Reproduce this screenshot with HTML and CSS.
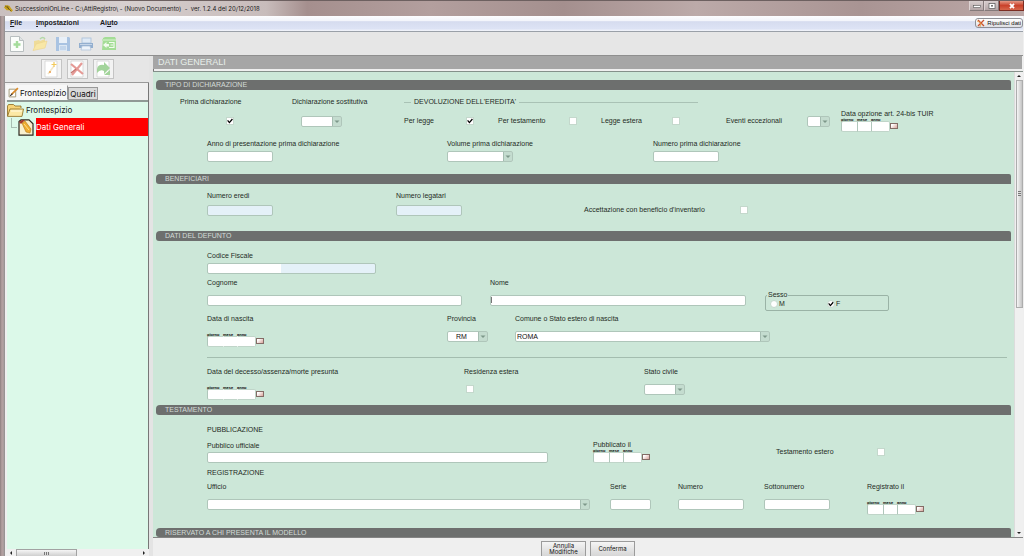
FILE: index.html
```html
<!DOCTYPE html>
<html lang="it">
<head>
<meta charset="utf-8">
<title>SuccessioniOnLine</title>
<link rel="stylesheet" href="styles.css">
</head>
<body>
<div class="window">
  <header class="titlebar">
    <svg class="app-icon" viewBox="0 0 10 10"><path d="M0 4 2 1 6 2 8 5 10 7 8 9 6 7 3 7Z" fill="#c9a21c"/><path d="M1 2 4 4 8 8M4 2 5 6" stroke="#54450c" fill="none" stroke-width=".7"/></svg>
    <h1 class="caption">SuccessioniOnLine - C:\AttiRegistro\ - (Nuovo Documento) &nbsp;- &nbsp;ver. 1.2.4 del 20/12/2018</h1>
    <div class="win-buttons">
      <button class="win-btn" aria-label="Riduci"><svg viewBox="0 0 8 6"><rect x=".5" y="2.5" width="7" height="2" fill="#fff" stroke="#555" stroke-width=".6"/></svg></button>
      <button class="win-btn" aria-label="Ingrandisci"><svg viewBox="0 0 8 6"><rect x="1" y=".5" width="6" height="5" fill="#fff" stroke="#555" stroke-width=".7"/><rect x="3" y="2" width="2" height="1.6" fill="#777"/></svg></button>
      <button class="win-btn win-close" aria-label="Chiudi"><svg viewBox="0 0 8 6"><path d="M2 .8 6 5.2M6 .8 2 5.2" stroke="#fff" stroke-width="1.8"/></svg></button>
    </div>
  </header>

  <nav class="menubar">
    <button class="menu"><u>F</u>ile</button>
    <button class="menu"><u>I</u>mpostazioni</button>
    <button class="menu">Ai<u>u</u>to</button>
    <button class="clean"><svg viewBox="0 0 8 8"><path d="M1 1 7 7M7 1 1 7" stroke="#c9502c" stroke-width="1.3"/><path d="M0 2 4 4 3 8" stroke="#e79a3d" fill="none" stroke-width=".8"/></svg>Ripulisci dati</button>
  </nav>

  <div class="toolbar">
    <button class="tool" aria-label="Nuovo"><svg viewBox="0 0 16 16"><path d="M1.500.5h9l4 4v11h-13z" fill="#fbfdfb" stroke="#b9bfc0"/><path d="M10.500.5v4h4" fill="#dfe3e4" stroke="#b9bfc0"/><path d="M8 5v7M4.500 8.500h7" stroke="#a5dc9c" stroke-width="2.400"/></svg></button>
    <button class="tool" aria-label="Apri"><svg viewBox="0 0 16 16"><path d="M2 14V5l5-1 1 1 5-2v4" fill="#efdc9a"/><path d="M1 14.500 4 8l11-3-2 7z" fill="#f8e7a6" stroke="#ecd48c" stroke-width=".6"/><path d="M8 3q3-3 5 0" stroke="#b5d8a8" fill="none" stroke-width="1.500"/></svg></button>
    <button class="tool" aria-label="Salva"><svg viewBox="0 0 16 16"><path d="M1 1h13l1 1v13H1z" fill="#a9c3e2"/><rect x="4" y="1" width="8" height="6" fill="#e9f0f8"/><rect x="4" y="9" width="8" height="6" fill="#dce7f3"/><path d="M5 11h6M5 13h6" stroke="#a9c3e2"/></svg></button>
    <button class="tool" aria-label="Stampa"><svg viewBox="0 0 16 16"><rect x="4" y="2" width="9" height="5" fill="#dfeaf6" stroke="#a9bfd8" stroke-width=".8"/><path d="M1 7h14v5H1z" fill="#93afcf"/><path d="M2 8.500h12" stroke="#c5d5e8"/><path d="M4 10h8l1 4H3z" fill="#edf3fa" stroke="#a9bfd8" stroke-width=".7"/></svg></button>
    <button class="tool" aria-label="Esci"><svg viewBox="0 0 16 16"><path d="M2 2 4 1h10l1 2v11H1z" fill="#a4dd96"/><path d="M1 3h14v2H1z" fill="#bfe8b4"/><path d="M2 9 5.500 6v2H8v2.500H5.500V12z" fill="#f2fbef"/><path d="M8 6.500h5v5H8M9.500 9H12" fill="none" stroke="#f2fbef" stroke-width="1.200"/></svg></button>
  </div>

  <div class="workspace">
    <aside class="sidebar">
      <div class="doc-tools">
        <button class="doc-tool" aria-label="Aggiungi"><svg viewBox="0 0 18 18"><path d="M3 1h12v16H3z" fill="#fff" stroke="#d2d2d2" stroke-width=".8"/><path d="m6 14 6-8" stroke="#f2e6c8" stroke-width="1.600"/><path d="M12 2v5M9.500 4.500h5" stroke="#f2c95a" stroke-width="1.200"/><circle cx="8" cy="12" r="1" fill="#eb9c4b"/></svg></button>
        <button class="doc-tool" aria-label="Elimina"><svg viewBox="0 0 18 18"><path d="M3 1h12v16H3z" fill="#fff" stroke="#d2d2d2" stroke-width=".8"/><path d="m3 4 12 10M14 3 4 15" stroke="#e59a96" stroke-width="2.200"/><path d="m3 13 5-4" stroke="#c5736e" stroke-width="1.500"/></svg></button>
        <button class="doc-tool" aria-label="Esporta"><svg viewBox="0 0 18 18"><path d="M3 1h12v16H3z" fill="#fff" stroke="#d2d2d2" stroke-width=".8"/><path d="M3 9q1-5 7-4V2l6 6-6 6v-3Q6 9 3 13z" fill="#a3d49b"/><path d="M10 15h6v-5z" fill="#a3d49b"/></svg></button>
      </div>
      <div class="tabs">
        <button class="tab tab-on"><svg viewBox="0 0 10 10"><path d="M1 2h6v7H1z" fill="#fff" stroke="#9a8f6c" stroke-width=".8"/><path d="M3 7 9 1" stroke="#d88a2a" stroke-width="1.600"/><path d="M2 8l2-2" stroke="#333"/></svg>Frontespizio</button>
        <button class="tab">Quadri</button>
      </div>
      <div class="tree">
        <div class="node">
          <svg viewBox="0 0 17 13"><path d="M.5 12V2l1-1.500h5L8 2h6v2" fill="#f6d477" stroke="#8a6a20" stroke-width=".8"/><path d="M.5 12.400 3 5h13.500L15 12.400z" fill="#fce9a5" stroke="#8a6a20" stroke-width=".8"/><path d="M4 7h11" stroke="#fffbe4"/></svg>
          <a href="#frontespizio">Frontespizio</a>
        </div>
        <div class="node child">
          <span class="branch"></span>
          <svg viewBox="0 0 16 17"><path d="M1 2.500 3 .8h8l4 4v11.400H1z" fill="#f9f0cf" stroke="#2d2a22" stroke-width="1.200"/><path d="m4 4 3-2 6 8-1 4-4-1z" fill="#efac31" stroke="#b07818" stroke-width=".6"/><path d="m1 3 3-2h3L3 5z" fill="#a5382b"/><path d="m6 5 5 6" stroke="#ffe08b"/></svg>
          <a class="selected" href="#dati-generali">Dati Generali</a>
        </div>
      </div>
      <div class="hscroll"><i class="arrow left"></i><i class="hthumb"></i><i class="arrow right"></i></div>
    </aside>

    <main class="content">
      <h2 class="page-title">DATI GENERALI</h2>
      <div class="scroll-area">
        <form class="form" id="dati">
          <section>
            <h3>TIPO DI DICHIARAZIONE</h3>
            <div class="body body-type">
              <div class="row r-type-heads">
                <label for="prima">Prima dichiarazione</label>
                <label for="sost">Dichiarazione sostitutiva</label>
                <div class="group-head">DEVOLUZIONE DELL'EREDITA'</div>
              </div>
              <div class="row r-type">
                <input type="checkbox" id="prima" checked>
                <select id="sost" class="w-sm"><option></option></select>
                <label for="legge">Per legge</label>
                <input type="checkbox" id="legge" checked>
                <label for="test">Per testamento</label>
                <input type="checkbox" id="test">
                <label for="estera">Legge estera</label>
                <input type="checkbox" id="estera">
                <label for="eventi">Eventi eccezionali</label>
                <select id="eventi" class="w-xs"><option></option></select>
                <div class="field">
                  <span class="lbl">Data opzione art. 24-bis TUIR</span>
                  <div class="date">
                    <label>giorno<input type="text"></label><label>mese<input type="text"></label><label class="year">anno<input type="text"></label><button type="button" class="cal" aria-label="Calendario"></button>
                  </div>
                </div>
              </div>
              <div class="row r-first">
                <div class="field tight"><label for="anno">Anno di presentazione prima dichiarazione</label><input id="anno" type="text" class="w-md"></div>
                <div class="field tight"><label for="volume">Volume prima dichiarazione</label><select id="volume" class="w-md"><option></option></select></div>
                <div class="field tight"><label for="numprima">Numero prima dichiarazione</label><input id="numprima" type="text" class="w-md"></div>
              </div>
            </div>
          </section>

          <section>
            <h3>BENEFICIARI</h3>
            <div class="body body-benef">
              <div class="row r-benef">
                <div class="field mid"><label for="eredi">Numero eredi</label><input id="eredi" type="text" class="w-md readonly" readonly></div>
                <div class="field mid"><label for="legatari">Numero legatari</label><input id="legatari" type="text" class="w-md readonly" readonly></div>
                <label for="inventario" class="on-control">Accettazione con beneficio d'inventario</label>
                <input type="checkbox" id="inventario" class="on-control">
              </div>
            </div>
          </section>

          <section>
            <h3>DATI DEL DEFUNTO</h3>
            <div class="body body-deceased">
              <div class="row r-code">
                <div class="field tight"><label for="cf">Codice Fiscale</label><input id="cf" type="text" class="code"></div>
              </div>
              <div class="row r-name">
                <div class="field wide"><label for="cognome">Cognome</label><input id="cognome" type="text"></div>
                <div class="field wide"><label for="nome">Nome</label><input id="nome" type="text" class="caret"></div>
                <fieldset class="sex">
                  <legend>Sesso</legend>
                  <label><input type="radio" name="sesso">M</label>
                  <label><input type="radio" name="sesso" checked>F</label>
                </fieldset>
              </div>
              <div class="row r-birth">
                <div class="field wide"><span class="lbl">Data di nascita</span>
                  <div class="date plain"><label>giorno<input type="text"></label><label>mese<input type="text"></label><label class="year">anno<input type="text"></label><button type="button" class="cal" aria-label="Calendario"></button></div>
                </div>
                <div class="field wide"><label for="prov">Provincia</label><select id="prov" class="w-sm prov"><option>RM</option></select></div>
                <div class="field wide"><label for="comune">Comune o Stato estero di nascita</label><select id="comune"><option>ROMA</option></select></div>
              </div>
              <hr>
              <div class="row r-death">
                <div class="field wide"><span class="lbl">Data del decesso/assenza/morte presunta</span>
                  <div class="date plain"><label>giorno<input type="text"></label><label>mese<input type="text"></label><label class="year">anno<input type="text"></label><button type="button" class="cal" aria-label="Calendario"></button></div>
                </div>
                <div class="field wide"><label for="resest">Residenza estera</label><input type="checkbox" id="resest" class="inset"></div>
                <div class="field wide"><label for="civile">Stato civile</label><select id="civile" class="w-sm"><option></option></select></div>
              </div>
            </div>
          </section>

          <section>
            <h3>TESTAMENTO</h3>
            <div class="body body-will">
              <h4>PUBBLICAZIONE</h4>
              <div class="row r-pub">
                <div class="field near"><label for="puff">Pubblico ufficiale</label><input id="puff" type="text"></div>
                <div class="field"><span class="lbl">Pubblicato il</span>
                  <div class="date"><label>giorno<input type="text"></label><label>mese<input type="text"></label><label class="year">anno<input type="text"></label><button type="button" class="cal" aria-label="Calendario"></button></div>
                </div>
                <label for="testest">Testamento estero</label>
                <input type="checkbox" id="testest">
              </div>
              <h4>REGISTRAZIONE</h4>
              <div class="row r-reg">
                <div class="field wide"><label for="ufficio">Ufficio</label><select id="ufficio"><option></option></select></div>
                <div class="field wide"><label for="serie">Serie</label><input id="serie" type="text" class="w-sm"></div>
                <div class="field wide"><label for="numero">Numero</label><input id="numero" type="text" class="w-md"></div>
                <div class="field wide"><label for="sotto">Sottonumero</label><input id="sotto" type="text" class="w-md"></div>
                <div class="field wide"><span class="lbl">Registrato il</span>
                  <div class="date"><label>giorno<input type="text"></label><label>mese<input type="text"></label><label class="year">anno<input type="text"></label><button type="button" class="cal" aria-label="Calendario"></button></div>
                </div>
              </div>
            </div>
          </section>

          <section>
            <h3 class="last">RISERVATO A CHI PRESENTA IL MODELLO</h3>
          </section>
        </form>
        <div class="vscroll"><i class="arrow up"></i><i class="vthumb"></i><i class="vtrack"></i><i class="arrow down"></i></div>
      </div>
      <footer class="actions">
        <button type="reset" form="dati">Annulla Modifiche</button>
        <button type="submit" form="dati">Conferma</button>
      </footer>
    </main>
  </div>
</div>
</body>
</html>
```
FILE: styles.css
```css
* { box-sizing: border-box; }

body {
  margin: 0;
  background: #efefef;
  color: #1f2b25;
  font: 7px/8px "Liberation Sans", Arial, sans-serif;
}
button, input, select { font: inherit; color: inherit; margin: 0; padding: 0; border-radius: 0; }
button { border: 0; background: none; white-space: nowrap; }
h1, h2, h3, h4 { margin: 0; font-size: 7px; font-weight: normal; }
svg { display: block; flex: none; }

.window {
  display: flex;
  flex-direction: column;
  min-height: 100vh;
  padding-right: 1px;
  padding-left: 5px;
  background: linear-gradient(90deg, #8d7f80 0, #b5a1a1 2px, #a79c9d 4px, #8a8a8a 5px, #efefef 5px);
}

/* Title bar */
.titlebar {
  display: flex;
  align-items: center;
  gap: 2px;
  height: 16px;
  margin-right: -1px;
  margin-left: -5px;
  padding-left: 4px;
  border-top: 1px solid #6d6060;
  background: linear-gradient(90deg, #c9bfbf 0, #d6cfcf 12%, #c8bcbb 26%, #a58f8e 30%, #b39f9e 42%, #a48f8e 55%, #bcaaa9 68%, #a99493 84%, #bda9a8 100%);
}
.app-icon { width: 9px; height: 9px; }
.caption { font: 6px/8px Inter, "Noto Sans", sans-serif; color: #201a1a; white-space: nowrap; }
.win-buttons { display: flex; align-self: flex-start; margin-left: auto; }
.win-btn {
  display: flex;
  align-items: center;
  justify-content: center;
  width: 15px;
  height: 10px;
  border: 1px solid #84797a;
  border-top: 0;
  border-left-color: #ddd2d2;
  background: linear-gradient(#d9cfcf, #b4a6a7);
}
.win-btn svg { width: 8px; height: 6px; }
.win-close { width: 25px; border-color: #7c2c22; background: linear-gradient(#e59a86, #c9422b 50%, #d7664a); }

/* Menu bar */
.menubar {
  display: flex;
  align-items: center;
  height: 16px;
  padding-bottom: 1px;
  padding-left: 5px;
  gap: 14px;
  border-bottom: 1px solid #9aa0a8;
  background: linear-gradient(#fdfdff 0, #f3f5fb 30%, #d6dcef 38%, #dde3f5 85%, #f4f6fb 100%);
}
.menu { font: bold 7px/8px "Liberation Sans", Arial, sans-serif; color: #1c1c24; }
.menu + .menu + .menu { margin-left: 7px; }
.clean {
  display: flex;
  align-items: center;
  gap: 2px;
  height: 10px;
  margin-left: auto;
  padding: 0 1px;
  border: 1px solid #8d8f96;
  border-radius: 3px;
  background: linear-gradient(#fff, #dedee2);
  font-size: 6px;
  color: #111;
}
.clean svg { width: 8px; height: 8px; }

/* Main toolbar */
.toolbar {
  display: flex;
  align-items: center;
  gap: 7px;
  height: 24px;
  padding-left: 4px;
  border-bottom: 1px solid #8f8f8f;
  background: #e6e6e6;
}
.tool svg { width: 16px; height: 16px; }

.workspace { display: flex; flex: 1; }

/* Sidebar */
.sidebar {
  display: flex;
  flex-direction: column;
  flex: none;
  width: 148px;
  border-right: 4px solid #e4e4e4;
  background: #efefef;
  box-shadow: inset -1px 0 #777, 1px 0 #777;
}
.doc-tools {
  display: flex;
  justify-content: center;
  gap: 5px;
  padding: 3px 0;
  border-bottom: 1px solid #999;
  background: #e6e6e6;
}
.doc-tool {
  display: flex;
  align-items: center;
  justify-content: center;
  width: 21px;
  height: 20px;
  border: 1px solid #c4c4c4;
  background: #f3f3f3;
}
.doc-tool svg { width: 18px; height: 18px; }
.tabs { display: flex; align-items: flex-end; height: 17px; padding-left: 1px; }
.tab {
  display: flex;
  align-items: center;
  gap: 1px;
  height: 13px;
  padding: 0 1px;
  border: 1px solid #999;
  background: #dadada;
  font: 8px/10px Inter, "Liberation Sans", sans-serif;
  color: #111;
}
.tab svg { width: 11px; height: 11px; }
.tab-on { height: 15px; border-color: transparent #999 transparent transparent; background: #f7f7f7; }
.tree {
  flex: 1;
  margin: 0 1px 0 2px;
  border-top: 2px solid #8f9a95;
  background: #dcf9e9;
}
.node {
  display: flex;
  align-items: center;
  gap: 2px;
  height: 16px;
  font: 8px/10px Inter, "Liberation Sans", sans-serif;
}
.node a { color: #1a1a1a; text-decoration: none; }
.node svg { width: 17px; height: 13px; }
.node.child { height: 18px; padding-left: 4px; gap: 1px; }
.node.child svg { width: 16px; height: 17px; }
.branch { width: 6px; height: 10px; margin-bottom: 8px; border: 1px solid #a9bfb3; border-width: 0 0 1px 1px; }
.node a.selected { flex: 1; margin-left: 1px; padding: 4px 0; background: #f00; color: #fff; }

.arrow { flex: none; width: 0; height: 0; border: 2px solid transparent; }
.arrow.left { border-right-color: #222; border-left: 0; }
.arrow.right { border-left-color: #222; border-right: 0; margin-left: auto; }
.arrow.up { border-bottom-color: #222; border-top: 0; }
.arrow.down { border-top-color: #222; border-bottom: 0; }
.hscroll { display: flex; align-items: center; height: 7px; padding: 0 4px 0 5px; gap: 4px; background: #f0f0f0; }
.hthumb {
  width: 61px;
  height: 7px;
  border: 1px solid #a2a2a2;
  border-bottom: 0;
  background: repeating-linear-gradient(90deg, #777 0 1px, #ddd 1px 2px) center / 5px 3px no-repeat, linear-gradient(#f6f6f6, #cfcfcf);
}

/* Content */
.content { display: flex; flex: 1; flex-direction: column; min-width: 0; }
.page-title {
  margin-right: 1px;
  padding: 0 5px;
  background: #a6a6a6;
  font-size: 9px;
  line-height: 13px;
  color: #e6efea;
}
.scroll-area {
  display: flex;
  flex: 1;
  margin-top: 2px;
  border-top: 1px solid #84908a;
  border-bottom: 1px solid #848484;
}
.form { flex: 1; min-width: 0; padding: 8px 3px 0; background: #cce7d8; }
.vscroll {
  display: flex;
  flex-direction: column;
  align-items: center;
  width: 9px;
  padding: 3px 0;
  gap: 3px;
  border-left: 1px solid #dcdcdc;
  background: #f0f0f0;
}
.vthumb {
  flex: 228;
  width: 7px;
  border: 1px solid #adadad;
  background: repeating-linear-gradient(#777 0 1px, #ddd 1px 2px) center / 3px 5px no-repeat, linear-gradient(90deg, #f6f6f6, #c4c4c4);
}
.vtrack { flex: 220; }

section h3 {
  height: 10px;
  padding-left: 9px;
  border-radius: 4px 2px 0 3px;
  background: #6d6f6e;
  line-height: 10px;
  color: #d3dbd7;
}
section h3.last { height: 9px; }
.body-type { padding: 8px 0 12px; }
.body-benef { padding: 8px 0 15px; }
.body-deceased { padding: 11px 0 5px; }
.body-will { padding: 10px 0 13px; }

/* Rows divide the section width into proportional columns */
.row { display: grid; }
.row > * { min-width: 0; white-space: nowrap; }
.r-type-heads { grid-template-columns: 24fr 112fr 112fr 294fr 313fr; }
.r-type {
  grid-template-columns: 70fr 75fr 103fr 62fr 32fr 71fr 32fr 71fr 54fr 81fr 34fr 170fr;
  align-items: center;
  padding-top: 4px;
}
.row > :first-child { grid-column: 2; }
.r-first { grid-template-columns: 51fr 240fr 206fr 358fr; padding-top: 8px; }
.r-benef { grid-template-columns: 51fr 189fr 188fr 156fr 271fr; }
.r-code { grid-template-columns: 51fr 169fr 635fr; }
.r-name { grid-template-columns: 51fr 283fr 275fr 124fr 122fr; padding-top: 5px; }
.r-name > .field > input { width: 90%; }
.r-name > .field + .field > input { width: 93%; }
.r-birth { grid-template-columns: 51fr 240fr 68fr 255fr 241fr; padding-top: 9px; }
.r-death { grid-template-columns: 51fr 257fr 180fr 367fr; padding-top: 10px; }
.r-pub { grid-template-columns: 51fr 341fr 45fr 183fr 101fr 134fr; align-items: center; padding-top: 7px; }
.r-pub > :nth-child(2) { grid-column: 4; }
.r-reg { grid-template-columns: 51fr 383fr 20fr 68fr 86fr 103fr 144fr; padding-top: 6px; }
.r-reg > :nth-child(2) { grid-column: 4; }

.field { display: flex; flex-direction: column; align-items: flex-start; }
.field.near { gap: 2px; }
.field.tight { gap: 3px; }
.field.mid { gap: 5px; }
.field.wide { gap: 8px; }
.on-control { align-self: end; margin-bottom: 2px; }

.group-head { display: flex; align-items: center; gap: 3px; }
.group-head::before, .group-head::after { content: ""; width: 7px; border-top: 1px solid #a9c2b5; }
.group-head::after { flex: 1; }

h4 { padding-left: 51px; line-height: 9px; }
.r-pub + h4 { padding-top: 5px; }
hr { height: 1px; margin: 10px 4px 0 51px; border: 0; background: #a3bdaf; }

/* Controls */
input[type="text"], select {
  width: 100%;
  height: 11px;
  border: 1px solid #afc6ba;
  border-radius: 2px;
  background: #fff;
}
input.w-md, select.w-md { width: 66px; }
input.w-sm, select.w-sm { width: 41px; }
select.w-xs { width: 23px; }
input[type="text"].readonly { background: #e4f1f8; }
input[type="text"].code { background: linear-gradient(90deg, #fff 44%, #e4f1f8 44%); }
input[type="text"].caret { background: linear-gradient(#777, #777) 0 1px / 1px 6px no-repeat #fff; }
select {
  appearance: none;
  padding: 0 12px 0 1px;
  background:
    url("data:image/svg+xml,%3Csvg xmlns='http://www.w3.org/2000/svg' viewBox='0 0 9 9'%3E%3Cpath fill='%23c4dccf' d='M0 0h9v9H0z'/%3E%3Cpath stroke='%23a5bdb1' d='M.5 0v9'/%3E%3Cpath fill='%237d978a' d='M2.500 3.500h5L5 6z'/%3E%3C/svg%3E") right center / 9px 9px no-repeat #fff;
  color: #111;
}
select.prov { padding-left: 8px; }
input[type="checkbox"], input[type="radio"] {
  appearance: none;
  width: 8px;
  height: 8px;
  border: 1px solid #c4d8cc;
  background: #fff;
}
input[type="radio"] { border-radius: 50%; }
input[type="checkbox"]:checked, input[type="radio"]:checked {
  background: url("data:image/svg+xml,%3Csvg xmlns='http://www.w3.org/2000/svg' viewBox='0 0 6 6'%3E%3Cpath d='M.6 2.400 2.400 4.600 5.400 1' fill='none' stroke='%23000' stroke-width='1.300'/%3E%3C/svg%3E") center / 6px 6px no-repeat #fff;
}
.inset { margin-top: 1px; margin-left: 2px; }

.sex {
  display: flex;
  align-self: end;
  margin: 0 0 -5px;
  padding: 1px 4px 2px;
  border: 1px solid #9ab3a6;
  border-radius: 2px;
}
.sex legend { padding: 0 1px; margin-left: -3px; }
.sex label { display: flex; flex: 1; align-items: center; gap: 1px; }

.date { display: flex; align-items: flex-end; }
.wide .date { padding-top: 2px; }
.date label {
  display: flex;
  flex-direction: column;
  width: 16px;
  font: bold 4px/3px "Liberation Sans", sans-serif;
  color: #000;
}
.date label + label { width: 14px; }
.date label.year { width: 19px; }
.date input[type="text"] { border-color: #c0d5c9 #c0d5c9 #c0d5c9 #afc6ba; border-right-width: 0; border-radius: 2px 0 0 2px; }
.date label + label input[type="text"] { border-radius: 0; }
.date.plain label + label input[type="text"] { border-left-color: #fff; }
.date label.year input[type="text"] { border-right-width: 1px; border-radius: 0 2px 2px 0; }
.cal {
  width: 8px;
  height: 6px;
  margin-bottom: 3px;
  border: 1px solid #846c66;
  background: linear-gradient(135deg, #fff 20%, #d9a59c);
}

/* Footer */
.actions { display: flex; justify-content: center; gap: 4px; padding: 3px 0 0; background: #efefef; }
.actions button {
  width: 45px;
  height: 15px;
  border: 1px solid #9b9b9b;
  border-bottom: 0;
  background: linear-gradient(#f5f5f5, #d6d6d6);
  font: 6px/6px Inter, "Liberation Sans", sans-serif;
  color: #111;
  white-space: normal;
}
```
